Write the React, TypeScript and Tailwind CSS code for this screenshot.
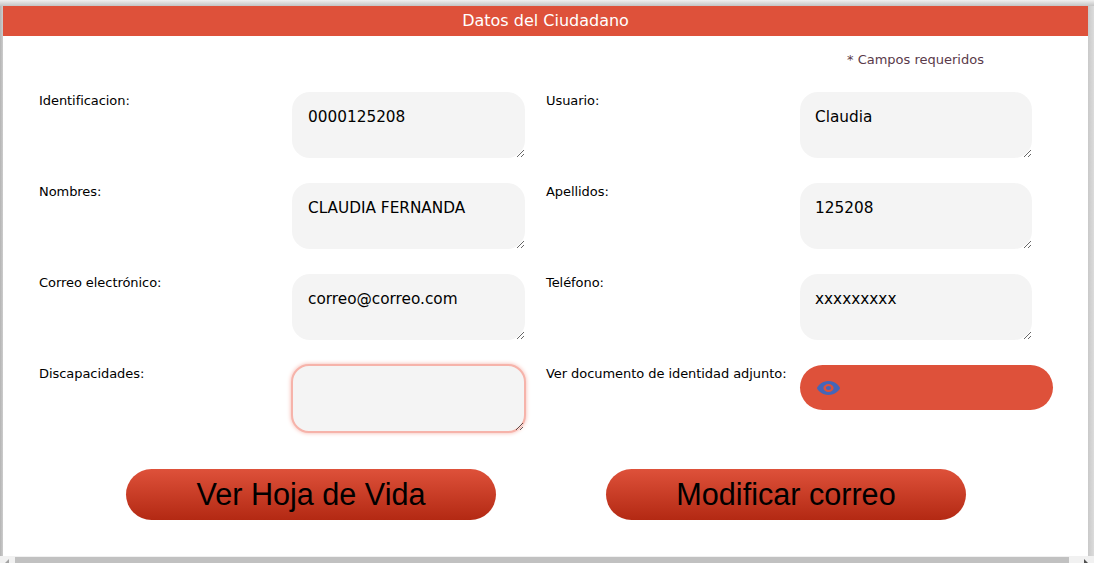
function Field({ value, focused }: { value: string; focused?: boolean }) {
  return (
    <textarea
      readOnly
      value={value}
      className={
        "block rounded-[18px] bg-[#f4f4f4] text-[15.3px] leading-[24px] text-black outline-none font-['DejaVu_Sans',sans-serif] " +
        (focused
          ? "-ml-[1px] -mt-[1px] h-[69px] w-[235px] border-2 border-[#f6b3aa] px-4 py-3 shadow-[0_0_4px_#f6b3aa]"
          : "h-[66px] w-[233px] px-4 pb-3 pt-[13px]")
      }
    />
  );
}

function RightField({ value }: { value: string }) {
  return (
    <textarea
      readOnly
      value={value}
      className="block h-[66px] w-[232px] rounded-[18px] bg-[#f4f4f4] pb-3 pl-[15px] pr-4 pt-[13px] text-[15.3px] leading-[24px] text-black outline-none font-['DejaVu_Sans',sans-serif]"
    />
  );
}

function Label({ children }: { children: string }) {
  return <div className="pt-[1px] text-[13px] leading-[16px] tracking-[-0.06px] text-black font-['DejaVu_Sans',sans-serif]">{children}</div>;
}

function Row({ a, b, c, d }: { a: string; b: React.ReactNode; c: string; d: React.ReactNode }) {
  return (
    <div className="grid h-[91px] grid-cols-[253px_254px_254px_288px]">
      <Label>{a}</Label>
      <div>{b}</div>
      <Label>{c}</Label>
      <div>{d}</div>
    </div>
  );
}

export default function App() {
  return (
    <div className="h-[563px] w-[1094px] overflow-hidden bg-white font-['DejaVu_Sans',sans-serif]">
      <div className="flex h-[556px] flex-col bg-[linear-gradient(90deg,#b4b4b4_0,#cdcdcd_3px,#fff_3px,#fff_1088px,#c9c9c9_1088px,#dcdcdc_1094px)] pl-[3px] pr-[6px]">
        <div className="-ml-[3px] -mr-[6px] h-[6px] bg-[linear-gradient(180deg,#f0f0f0,#c4c4c4)]" />
        <div className="flex h-[30px] items-center justify-center bg-[#de513a] text-[16px] text-white font-['DejaVu_Sans',sans-serif]">
          Datos del Ciudadano
        </div>
        <div className="flex-1 bg-white pl-[36px]">
          <div className="h-[56px] pl-[808px] pt-[16px] text-[13px] leading-[16px] text-[#5a3a4a]">
            * Campos requeridos
          </div>
          <Row a="Identificacion:" b={<Field value="0000125208" />} c="Usuario:" d={<RightField value="Claudia" />} />
          <Row a="Nombres:" b={<Field value="CLAUDIA FERNANDA" />} c="Apellidos:" d={<RightField value="125208" />} />
          <Row a="Correo electrónico:" b={<Field value="correo@correo.com" />} c="Teléfono:" d={<RightField value="xxxxxxxxx" />} />
          <Row
            a="Discapacidades:"
            b={<Field value="" focused />}
            c="Ver documento de identidad adjunto:"
            d={
              <div className="flex h-[45px] w-[253px] items-center rounded-full bg-[#de513a] pl-[17px]">
                <svg width="23" height="16" viewBox="0 0 576 512" fill="#4566b8" preserveAspectRatio="none">
                  <path d="M288 32C207 32 142 69 95 113 48 156 17 208 2 244c-3 8-3 16 0 24 15 36 46 88 93 131 47 44 112 81 193 81s146-37 193-81c47-43 78-95 93-131 3-8 3-16 0-24-15-36-46-88-93-131C434 69 369 32 288 32zm0 96a128 128 0 1 1 0 256 128 128 0 1 1 0-256zm0 64a64 64 0 1 0 0 128 64 64 0 1 0 0-128z" />
                </svg>
              </div>
            }
          />
          <div className="mt-[13px] flex pl-[87px]">
            <button className="h-[51px] w-[370px] rounded-full bg-[linear-gradient(180deg,#de513a,#b32913)] text-[30.6px] text-black font-['Liberation_Sans',sans-serif]">
              Ver Hoja de Vida
            </button>
            <button className="ml-[110px] h-[51px] w-[360px] rounded-full bg-[linear-gradient(180deg,#de513a,#b32913)] text-[30.6px] text-black font-['Liberation_Sans',sans-serif]">
              Modificar correo
            </button>
          </div>
        </div>
      </div>
      <div className="flex h-[7px] items-end bg-[#f1f1f1]">
        <div className="flex h-[6px] w-[15px] items-end pl-[5px]">
          <svg width="4" height="4" viewBox="0 0 4 4" fill="#a3a3a3"><path d="M4 0V4H0Z" /></svg>
        </div>
        <div className="h-[6px] flex-1 bg-[#c1c1c1]" />
        <div className="flex h-[6px] w-[25px] items-end pl-[15px]">
          <svg width="4" height="4" viewBox="0 0 4 4" fill="#505050"><path d="M0 0V4H4Z" /></svg>
        </div>
      </div>
    </div>
  );
}
